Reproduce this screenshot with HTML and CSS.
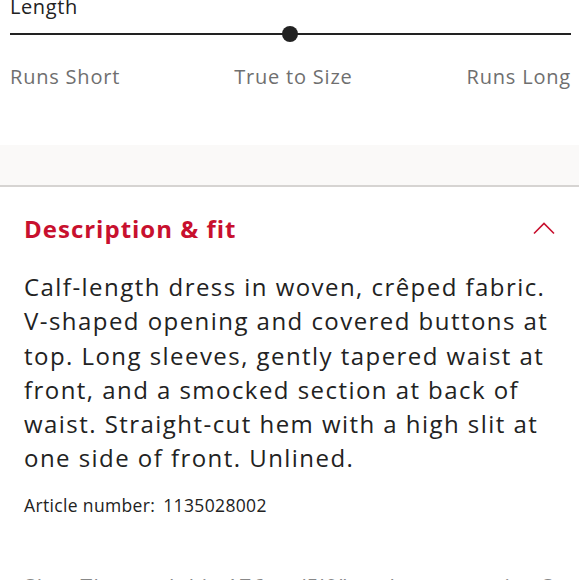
FILE: index.html
```html
<!DOCTYPE html>
<html>
<head>
<meta charset="utf-8">
<link rel="stylesheet" href="styles.css">
</head>
<body>
<section class="fit">
  <div class="fit-title">Length</div>
  <div class="slider">
    <div class="track"></div>
    <div class="knob"></div>
  </div>
  <div class="scale">
    <span>Runs Short</span>
    <span>True to Size</span>
    <span>Runs Long</span>
  </div>
</section>
<div class="band"></div>
<section class="desc">
  <div class="desc-head">
    <h2>Description &amp; fit</h2>
    <svg class="chev" width="22" height="14" viewBox="0 0 22 14"><path d="M1 12.5 L11 2.5 L21 12.5" fill="none" stroke="#c8102e" stroke-width="1.6"/></svg>
  </div>
  <p class="text">Calf-length dress in woven, crêped fabric.<br>V-shaped opening and covered buttons at<br>top. Long sleeves, gently tapered waist at<br>front, and a smocked section at back of<br>waist. Straight-cut hem with a high slit at<br>one side of front. Unlined.</p>
  <div class="article"><span>Article number:</span><span>1135028002</span></div>
  <div class="note">Size: The model is 176cm/5'9" and wears a size S</div>
</section>
</body>
</html>
```
FILE: styles.css
```css
html, body {
  margin: 0;
  padding: 0;
  background: #fff;
  overflow: hidden;
}
body {
  font-family: "Open Sans", "Noto Sans", sans-serif;
  color: #222;
  width: 579px;
  height: 580px;
}
.fit {
  padding: 0 8px 0 10px;
}
.fit-title {
  font-size: 20px;
  line-height: 24px;
  margin-top: -5px;
  letter-spacing: 0.6px;
  color: #222;
}
.slider {
  position: relative;
  height: 16px;
  margin-top: 7px;
  display: flex;
  align-items: center;
}
.track {
  flex: 1;
  height: 2px;
  background: #222;
}
.knob {
  position: absolute;
  left: 272px;
  top: 0;
  width: 16px;
  height: 16px;
  border-radius: 50%;
  background: #222;
}
.scale {
  display: flex;
  justify-content: space-between;
  margin-top: 22px;
  font-size: 20px;
  line-height: 26px;
  letter-spacing: 0.8px;
  color: #6f6f6f;
}
.band {
  margin-top: 55px;
  height: 40px;
  background: #faf9f8;
  border-bottom: 2px solid #d6d4d2;
}
.desc {
  padding: 0 24px;
}
.desc-head {
  display: flex;
  justify-content: space-between;
  align-items: center;
  margin-top: 25px;
  height: 32px;
}
.desc-head h2 {
  margin: 0;
  font-size: 24px;
  font-weight: 700;
  letter-spacing: 1px;
  color: #c8102e;
}
.text {
  margin: 26px 0 0;
  font-size: 24px;
  line-height: 34.3px;
  letter-spacing: 1.45px;
  color: #222;
  white-space: nowrap;
}
.article {
  margin-top: 18px;
  font-size: 17.5px;
  line-height: 22px;
  letter-spacing: 0.35px;
  display: flex;
  gap: 8px;
}
.note {
  margin-top: 58px;
  font-size: 21px;
  line-height: 26px;
  letter-spacing: 1.2px;
  white-space: nowrap;
  color: #888;
}
```
